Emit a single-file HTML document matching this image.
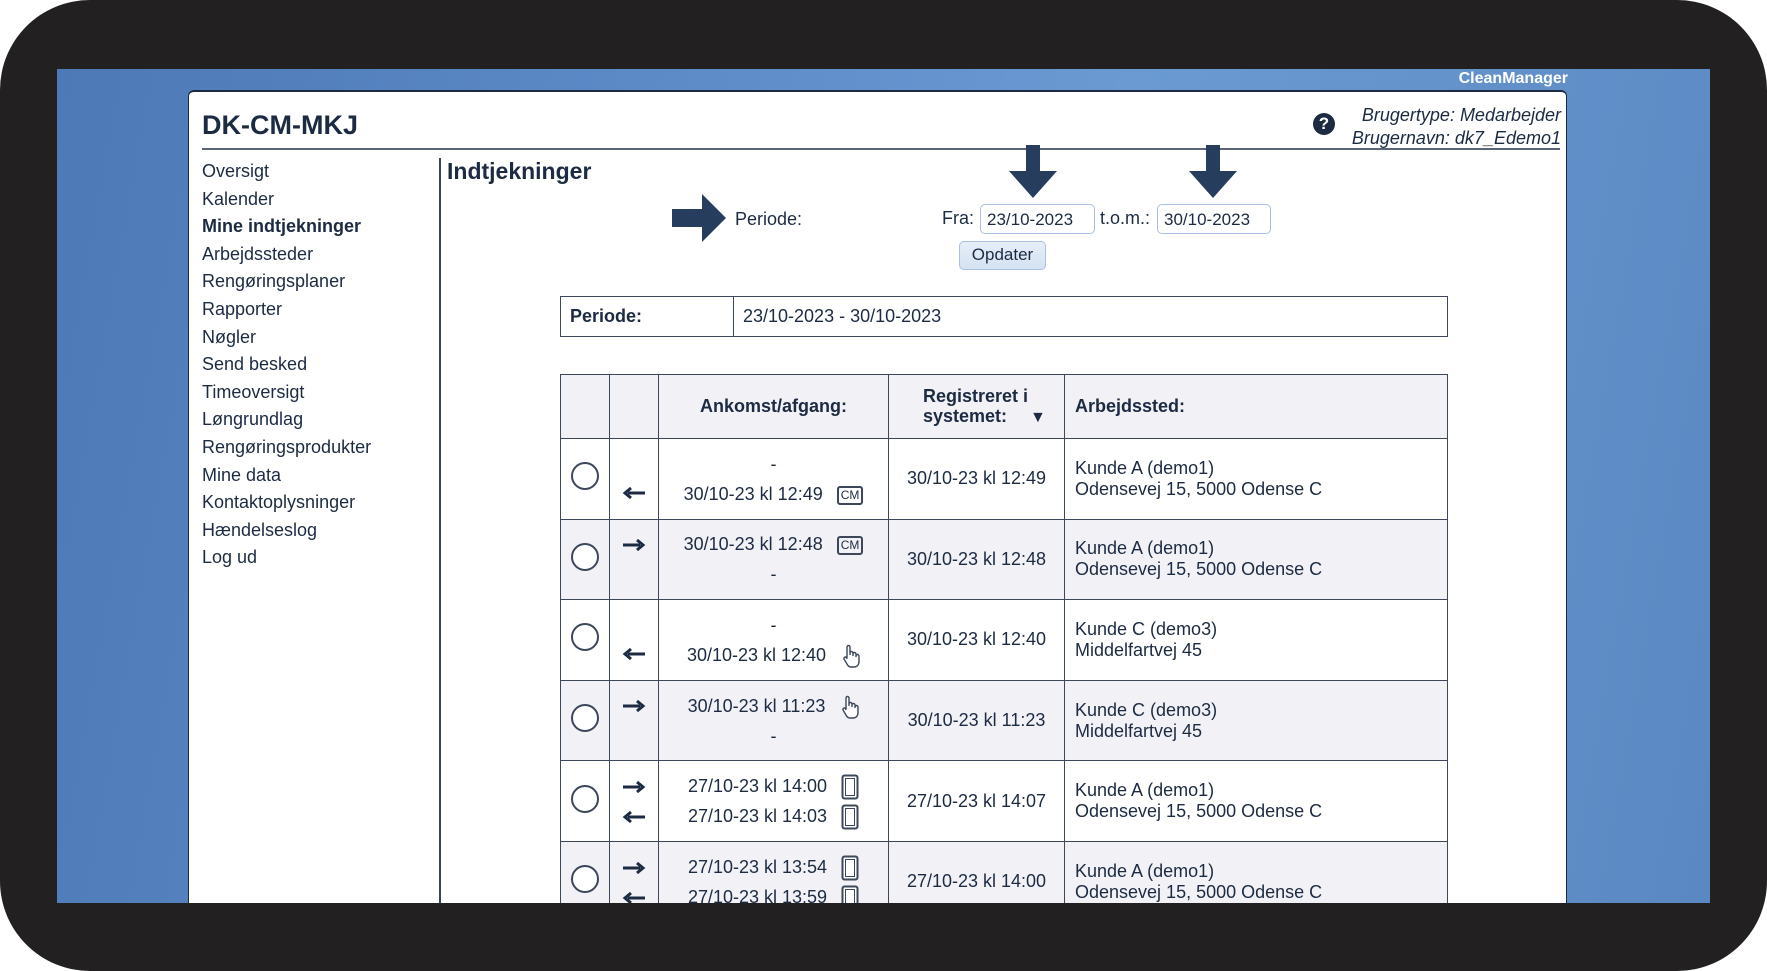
<!DOCTYPE html>
<html><head><meta charset="utf-8"><style>
*{margin:0;padding:0;box-sizing:border-box}
body{width:1767px;height:971px;background:#fff;overflow:hidden;position:relative;font-family:"Liberation Sans",sans-serif;color:#1c2b42}
.frame{position:absolute;left:0;top:0;width:1767px;height:971px;background:#222021;border-radius:90px}
.blue{position:absolute;left:57px;top:69px;width:1653px;height:834px;background:linear-gradient(100deg,#4d79b6 0%,#5f8ecb 40%,#6b9ad2 60%,#5a88c2 100%);overflow:hidden}
.cm{position:absolute;left:1440px;top:70px;width:128px;text-align:right;color:#fff;font-weight:bold;font-size:16px}
.panel{position:absolute;left:188px;top:90px;width:1379px;height:813px;background:#fff;border-radius:6px 6px 0 0;border-top:2px solid #1c2b42;border-left:1px solid #1c2b42;border-right:1px solid #1c2b42}
.a{position:absolute;white-space:nowrap}
.nav{font-size:18px;line-height:27.6px;left:202px;top:158px}
.hl{position:absolute;left:202px;top:148px;width:1358px;height:2px;background:#5a6577}
.vl{position:absolute;left:439px;top:158px;width:2px;height:745px;background:#3a4558}
.inp{position:absolute;height:30px;border:1.5px solid #a9c0e0;border-radius:5px;font-size:17px;padding:5px 6px;background:#fff}
.btn{position:absolute;left:959px;top:241px;width:87px;height:29px;border:1.5px solid #a9c0e0;border-radius:5px;background:linear-gradient(#e6eef8,#d5e2f2);font-size:17px;text-align:center;line-height:26px}
table{border-collapse:collapse;position:absolute;font-size:18px}
td{border:1.5px solid #3c475a}
.pt{left:560px;top:296px;width:888px;height:41px}
.mt{left:560px;top:374px;width:888px}
.mt td{height:80.6px;vertical-align:middle}
.mt tr.h td{height:64px;background:#f1f1f6;font-weight:bold}
.mt tr.g td{background:#f1f1f6}
.c{text-align:center}
.rad{display:inline-block;width:28px;height:28px;border:2px solid #3c475a;border-radius:50%;background:#fff}
.ic{display:inline-block;vertical-align:middle;margin-left:14px}
.cmb{display:inline-block;border:2px solid #3c475a;border-radius:3px;font-size:12px;padding:0 2px;line-height:15px;margin-left:14px;vertical-align:middle}
svg.ar{vertical-align:middle}
.clip{position:absolute;left:0;top:0;width:1767px;height:903px;overflow:hidden}
</style></head><body>
<div class="frame"></div>
<div class="blue"></div>
<div class="clip">
<div class="cm">CleanManager</div>
<div class="panel"></div>
<div class="a" style="left:202px;top:110px;font-size:27px;font-weight:bold">DK-CM-MKJ</div>
<div class="a" style="left:1313px;top:113px;width:22px;height:22px;border-radius:50%;background:#1c2b42;color:#fff;font-weight:bold;font-size:17px;text-align:center;line-height:22px">?</div>
<div class="a" style="right:206px;top:104px;text-align:right;font-style:italic;font-size:18px;line-height:23px">Brugertype: Medarbejder<br>Brugernavn: dk7_Edemo1</div>
<div class="hl"></div>
<div class="vl"></div>
<div class="a nav">Oversigt<br>Kalender<br><b>Mine indtjekninger</b><br>Arbejdssteder<br>Rengøringsplaner<br>Rapporter<br>Nøgler<br>Send besked<br>Timeoversigt<br>Løngrundlag<br>Rengøringsprodukter<br>Mine data<br>Kontaktoplysninger<br>Hændelseslog<br>Log ud</div>
<div class="a" style="left:447px;top:158px;font-size:23px;font-weight:bold">Indtjekninger</div>
<svg class="a" style="left:670px;top:192px" width="58" height="52"><path d="M2 17H32V2L56 26L32 50V35H2Z" fill="#263d5e"/></svg>
<div class="a" style="left:735px;top:209px;font-size:18px">Periode:</div>
<svg class="a" style="left:1007px;top:143px" width="52" height="57"><path d="M19 2H33V28H50L26 55L2 28H19Z" fill="#263d5e"/></svg>
<svg class="a" style="left:1187px;top:143px" width="52" height="57"><path d="M19 2H33V28H50L26 55L2 28H19Z" fill="#263d5e"/></svg>
<div class="a" style="left:942px;top:208px;font-size:18px">Fra:</div>
<div class="inp" style="left:980px;top:204px;width:115px">23/10-2023</div>
<div class="a" style="left:1100px;top:208px;font-size:18px">t.o.m.:</div>
<div class="inp" style="left:1157px;top:204px;width:114px">30/10-2023</div>
<div class="btn">Opdater</div>
<table class="pt"><tr><td style="width:173px;padding-left:9px;font-weight:bold">Periode:</td><td style="padding-left:9px">23/10-2023 - 30/10-2023</td></tr></table>
<table class="mt">
<tr class="h"><td style="width:49px"></td><td style="width:49px"></td><td class="c" style="width:230px">Ankomst/afgang:</td><td style="width:176px;line-height:20px;padding-left:34px">Registreret i<br>systemet: <span style="font-size:16px;margin-left:18px">▼</span></td><td style="padding-left:10px">Arbejdssted:</td></tr>
<tr><td class="c"><span class="rad"></span></td><td class="c" style="vertical-align:bottom;padding-bottom:16px"><svg class="ar" width="24" height="14"><path d="M23 7H6M9 2L3 7L9 12" stroke="#1c2b42" stroke-width="3" fill="none"/></svg></td><td class="c" style="line-height:30px">-<br>30/10-23 kl 12:49<span class="cmb">CM</span></td><td class="c">30/10-23 kl 12:49</td><td style="padding-left:10px;line-height:21px">Kunde A (demo1)<br>Odensevej 15, 5000 Odense C</td></tr>
<tr class="g"><td class="c"><span class="rad"></span></td><td class="c" style="vertical-align:top;padding-top:14px"><svg class="ar" width="24" height="14"><path d="M1 7H18M15 2L21 7L15 12" stroke="#1c2b42" stroke-width="3" fill="none"/></svg></td><td class="c" style="line-height:30px">30/10-23 kl 12:48<span class="cmb">CM</span><br>-</td><td class="c">30/10-23 kl 12:48</td><td style="padding-left:10px;line-height:21px">Kunde A (demo1)<br>Odensevej 15, 5000 Odense C</td></tr>
<tr><td class="c"><span class="rad"></span></td><td class="c" style="vertical-align:bottom;padding-bottom:16px"><svg class="ar" width="24" height="14"><path d="M23 7H6M9 2L3 7L9 12" stroke="#1c2b42" stroke-width="3" fill="none"/></svg></td><td class="c" style="line-height:30px">-<br>30/10-23 kl 12:40<svg class="ic" width="20" height="24"><path d="M7 14V3a1.5 1.5 0 0 1 3 0v8M10 11V9a1.5 1.5 0 0 1 3 0v3M13 12V10a1.5 1.5 0 0 1 3 0v3M16 13v-1a1.5 1.5 0 0 1 3 0v5c0 4-2 6-5 6h-3c-2 0-3-1-4-3l-3-5a1.5 1.5 0 0 1 2.5-1.5L7 15" stroke="#3c475a" stroke-width="1.4" fill="#fff"/></svg></td><td class="c">30/10-23 kl 12:40</td><td style="padding-left:10px;line-height:21px">Kunde C (demo3)<br>Middelfartvej 45</td></tr>
<tr class="g"><td class="c"><span class="rad"></span></td><td class="c" style="vertical-align:top;padding-top:14px"><svg class="ar" width="24" height="14"><path d="M1 7H18M15 2L21 7L15 12" stroke="#1c2b42" stroke-width="3" fill="none"/></svg></td><td class="c" style="line-height:30px">30/10-23 kl 11:23<svg class="ic" width="20" height="24"><path d="M7 14V3a1.5 1.5 0 0 1 3 0v8M10 11V9a1.5 1.5 0 0 1 3 0v3M13 12V10a1.5 1.5 0 0 1 3 0v3M16 13v-1a1.5 1.5 0 0 1 3 0v5c0 4-2 6-5 6h-3c-2 0-3-1-4-3l-3-5a1.5 1.5 0 0 1 2.5-1.5L7 15" stroke="#3c475a" stroke-width="1.4" fill="#fff"/></svg><br>-</td><td class="c">30/10-23 kl 11:23</td><td style="padding-left:10px;line-height:21px">Kunde C (demo3)<br>Middelfartvej 45</td></tr>
<tr><td class="c"><span class="rad"></span></td><td class="c" style="line-height:30px"><svg class="ar" width="24" height="14"><path d="M1 7H18M15 2L21 7L15 12" stroke="#1c2b42" stroke-width="3" fill="none"/></svg><br><svg class="ar" width="24" height="14"><path d="M23 7H6M9 2L3 7L9 12" stroke="#1c2b42" stroke-width="3" fill="none"/></svg></td><td class="c" style="line-height:30px">27/10-23 kl 14:00<svg class="ic" width="18" height="26"><rect x="1.5" y="1.5" width="15" height="23" rx="2" stroke="#3c475a" stroke-width="2" fill="#fff"/><rect x="4.5" y="4.5" width="9" height="17" stroke="#3c475a" stroke-width="1" fill="none"/></svg><br>27/10-23 kl 14:03<svg class="ic" width="18" height="26"><rect x="1.5" y="1.5" width="15" height="23" rx="2" stroke="#3c475a" stroke-width="2" fill="#fff"/><rect x="4.5" y="4.5" width="9" height="17" stroke="#3c475a" stroke-width="1" fill="none"/></svg></td><td class="c">27/10-23 kl 14:07</td><td style="padding-left:10px;line-height:21px">Kunde A (demo1)<br>Odensevej 15, 5000 Odense C</td></tr>
<tr class="g"><td class="c"><span class="rad"></span></td><td class="c" style="line-height:30px"><svg class="ar" width="24" height="14"><path d="M1 7H18M15 2L21 7L15 12" stroke="#1c2b42" stroke-width="3" fill="none"/></svg><br><svg class="ar" width="24" height="14"><path d="M23 7H6M9 2L3 7L9 12" stroke="#1c2b42" stroke-width="3" fill="none"/></svg></td><td class="c" style="line-height:30px">27/10-23 kl 13:54<svg class="ic" width="18" height="26"><rect x="1.5" y="1.5" width="15" height="23" rx="2" stroke="#3c475a" stroke-width="2" fill="#fff"/><rect x="4.5" y="4.5" width="9" height="17" stroke="#3c475a" stroke-width="1" fill="none"/></svg><br>27/10-23 kl 13:59<svg class="ic" width="18" height="26"><rect x="1.5" y="1.5" width="15" height="23" rx="2" stroke="#3c475a" stroke-width="2" fill="#fff"/><rect x="4.5" y="4.5" width="9" height="17" stroke="#3c475a" stroke-width="1" fill="none"/></svg></td><td class="c">27/10-23 kl 14:00</td><td style="padding-left:10px;line-height:21px">Kunde A (demo1)<br>Odensevej 15, 5000 Odense C</td></tr>
</table>
</div>
</body></html>
